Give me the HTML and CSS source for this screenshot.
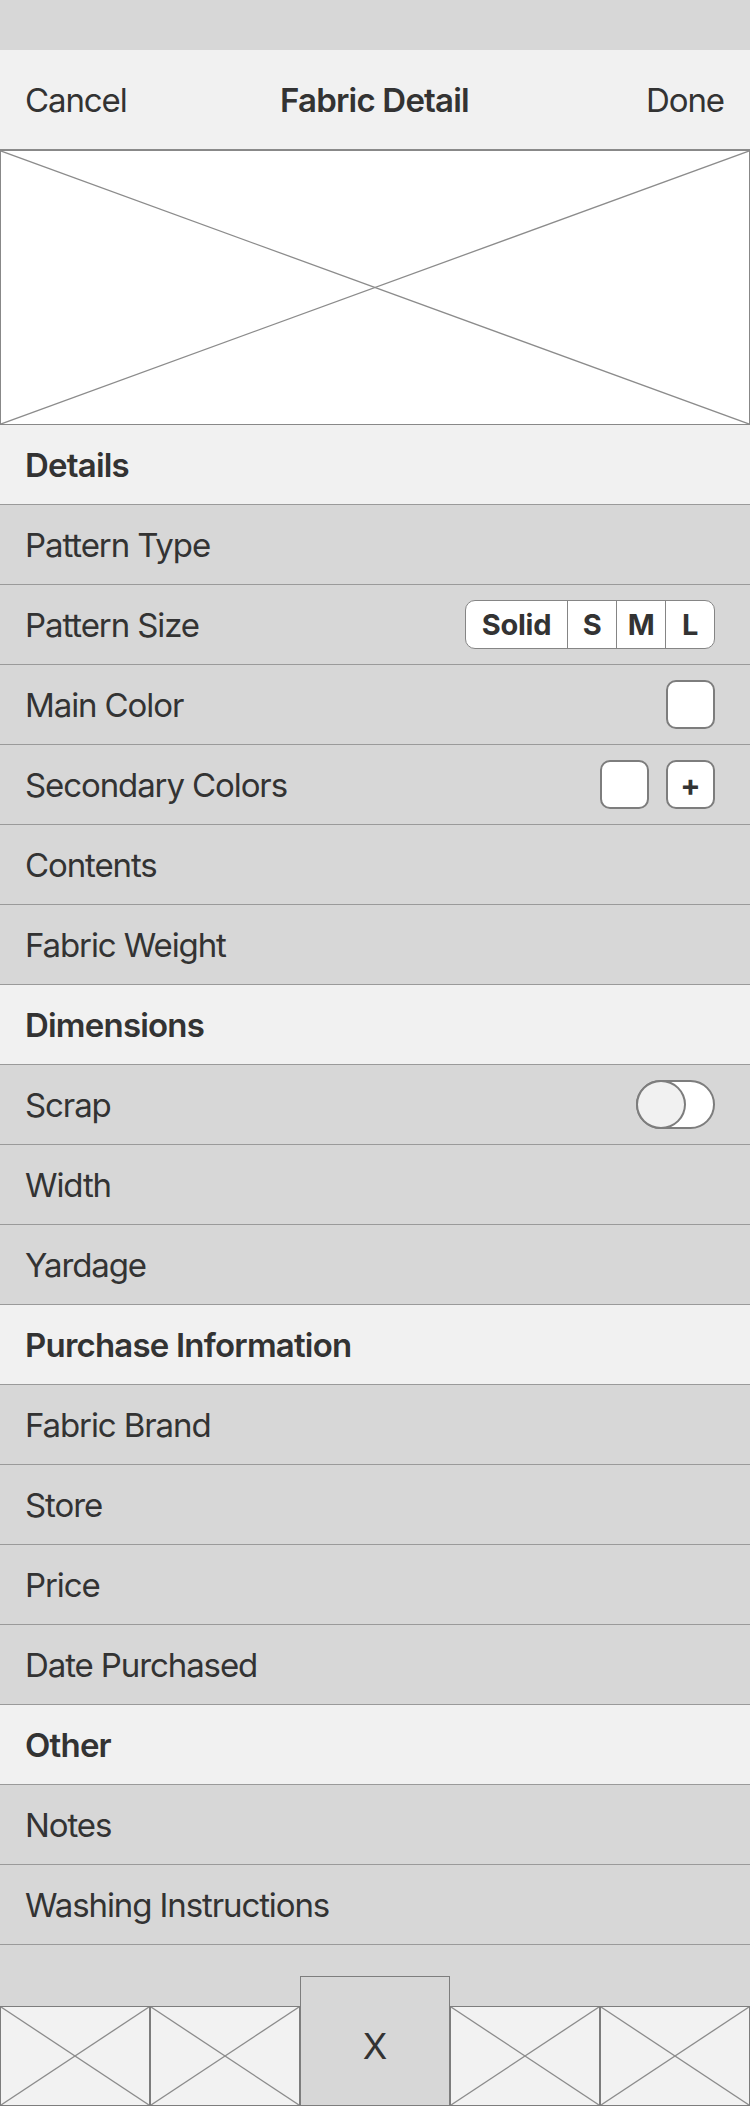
FILE: index.html
```html
<!DOCTYPE html>
<html>
<head>
<meta charset="utf-8">
<link rel="stylesheet" href="styles.css">
</head>
<body>
<div class="screen">
  <div class="status"></div>
  <div class="navbar">
    <span class="nav-btn">Cancel</span>
    <span class="nav-title">Fabric Detail</span>
    <span class="nav-btn nav-right">Done</span>
  </div>
  <div class="hero">
    <svg class="xsvg" viewBox="0 0 100 100" preserveAspectRatio="none"><line x1="0" y1="0" x2="100" y2="100"/><line x1="100" y1="0" x2="0" y2="100"/></svg>
  </div>
  <div class="list">
    <div class="row header">Details</div>
    <div class="row">Pattern Type</div>
    <div class="row"><span>Pattern Size</span>
      <div class="segment"><span class="seg seg-solid">Solid</span><span class="seg">S</span><span class="seg">M</span><span class="seg">L</span></div>
    </div>
    <div class="row"><span>Main Color</span><div class="controls"><span class="swatch"></span></div></div>
    <div class="row"><span>Secondary Colors</span><div class="controls"><span class="swatch"></span><span class="swatch plus">+</span></div></div>
    <div class="row">Contents</div>
    <div class="row">Fabric Weight</div>
    <div class="row header">Dimensions</div>
    <div class="row"><span>Scrap</span><span class="toggle"><span class="knob"></span></span></div>
    <div class="row">Width</div>
    <div class="row">Yardage</div>
    <div class="row header">Purchase Information</div>
    <div class="row">Fabric Brand</div>
    <div class="row">Store</div>
    <div class="row">Price</div>
    <div class="row">Date Purchased</div>
    <div class="row header">Other</div>
    <div class="row">Notes</div>
    <div class="row">Washing Instructions</div>
  </div>
  <div class="tabbar">
    <div class="tab"><svg class="xsvg" viewBox="0 0 100 100" preserveAspectRatio="none"><line x1="0" y1="0" x2="100" y2="100"/><line x1="100" y1="0" x2="0" y2="100"/></svg></div>
    <div class="tab"><svg class="xsvg" viewBox="0 0 100 100" preserveAspectRatio="none"><line x1="0" y1="0" x2="100" y2="100"/><line x1="100" y1="0" x2="0" y2="100"/></svg></div>
    <div class="tab tab-center">X</div>
    <div class="tab"><svg class="xsvg" viewBox="0 0 100 100" preserveAspectRatio="none"><line x1="0" y1="0" x2="100" y2="100"/><line x1="100" y1="0" x2="0" y2="100"/></svg></div>
    <div class="tab"><svg class="xsvg" viewBox="0 0 100 100" preserveAspectRatio="none"><line x1="0" y1="0" x2="100" y2="100"/><line x1="100" y1="0" x2="0" y2="100"/></svg></div>
  </div>
</div>
</body>
</html>
```
FILE: styles.css
```css
* { box-sizing: border-box; }
html, body { margin: 0; padding: 0; }
body {
  font-family: Inter, "Noto Sans", sans-serif;
  color: #333333;
  background: #d7d7d7;
}
.screen { width: 750px; height: 2106px; overflow: hidden; background: #d7d7d7; }
.status { height: 50px; background: #d7d7d7; }
.navbar {
  height: 100px;
  background: #f1f1f1;
  border-bottom: 1px solid #8a8a8a;
  display: grid;
  grid-template-columns: 1fr auto 1fr;
  align-items: center;
  padding: 0 26px 0 25px;
  font-size: 33px;
  letter-spacing: -1.1px;
}
.nav-title { font-weight: 600; letter-spacing: -0.8px; }
.nav-right { text-align: right; }
.hero {
  height: 275px;
  background: #ffffff;
  border: 1px solid #888888;
  display: flex;
}
.xsvg { width: 100%; height: 100%; display: block; }
.xsvg line { stroke: #8c8c8c; stroke-width: 1.3; vector-effect: non-scaling-stroke; }
.row {
  height: 80px;
  border-bottom: 1px solid #9a9a9a;
  background: #d7d7d7;
  display: flex;
  align-items: center;
  justify-content: space-between;
  padding: 0 35px 0 25px;
  font-size: 33px;
  letter-spacing: -1.1px;
}
.row.header { background: #f1f1f1; font-weight: 600; letter-spacing: -0.8px; }
.segment {
  display: flex;
  height: 49px;
  border: 1.5px solid #858585;
  border-radius: 10px;
  background: #ffffff;
  overflow: hidden;
}
.seg {
  width: 49px;
  display: flex;
  align-items: center;
  justify-content: center;
  font-weight: 700;
  font-size: 29px;
  letter-spacing: -0.3px;
  border-left: 1px solid #858585;
}
.seg-solid { width: 101px; border-left: none; }
.controls { display: flex; gap: 17px; }
.swatch {
  width: 49px; height: 49px;
  border: 2px solid #7d7d7d;
  border-radius: 10px;
  background: #ffffff;
  display: flex; align-items: center; justify-content: center;
}
.plus { font-weight: 700; font-size: 30px; letter-spacing: 0; }
.toggle {
  position: relative;
  width: 79px; height: 49px;
  border: 2px solid #7d7d7d;
  border-radius: 25px;
  background: #ffffff;
}
.knob {
  position: absolute;
  left: -2px; top: -2px;
  width: 50px; height: 49px;
  border: 2px solid #7d7d7d;
  border-radius: 50%;
  background: #f1f1f1;
}
.tabbar {
  height: 161px;
  display: flex;
  align-items: flex-end;
  background: #d7d7d7;
}
.tab {
  width: 150px;
  height: 100px;
  border: 1.5px solid #7d7d7d;
  background: #f2f2f2;
}
.tab-center {
  height: 130px;
  background: #d7d7d7;
  display: flex;
  align-items: center;
  justify-content: center;
  padding-top: 10px;
  font-size: 36px;
}
```
